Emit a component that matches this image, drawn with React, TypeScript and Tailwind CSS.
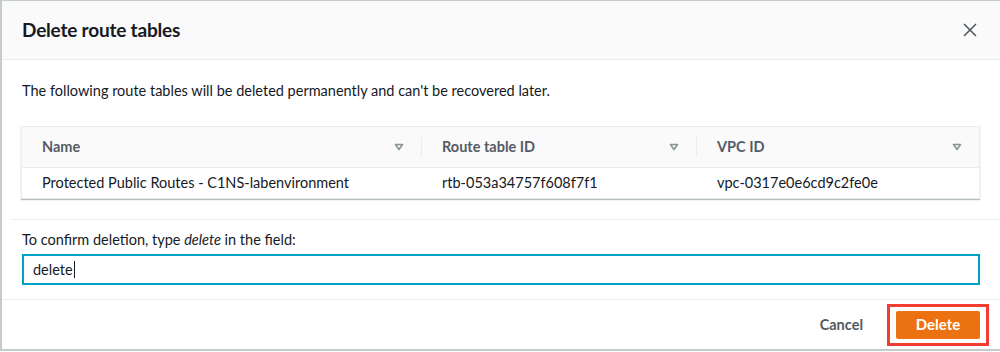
import { X } from 'lucide-react';

const columns = [
  { label: 'Name', width: 'w-[400px]' },
  { label: 'Route table ID', width: 'w-[275px]' },
  { label: 'VPC ID', width: 'flex-1' },
];

const row = ['Protected Public Routes - C1NS-labenvironment', 'rtb-053a34757f608f7f1', 'vpc-0317e0e6cd9c2fe0e'];

function SortIcon() {
  return (
    <svg width="10" height="8" viewBox="0 0 10 8" className="shrink-0">
      <path d="M1.5 1.5h7L5 6.5z" fill="none" stroke="#879596" strokeWidth="1.6" strokeLinejoin="round" />
    </svg>
  );
}

export default function App() {
  return (
    <div className="w-[1000px] h-[352px] bg-white font-['Lato',sans-serif] text-[#16191f]">
      <div className="h-[351px] border-l-2 border-b-2 border-t border-[#aab7b8]/70 flex flex-col">
        <div className="h-[59px] shrink-0 bg-[#fafafa] border-b border-[#eaeded] flex items-center justify-between pl-5 pr-[19px]">
          <h2 className="text-[19px] font-bold tracking-[-0.2px]">Delete route tables</h2>
          <X size={22} strokeWidth={1.8} className="text-[#545b64]" />
        </div>

        <div className="px-5 pt-[21px]">
          <p className="text-[14.5px] leading-5">The following route tables will be deleted permanently and can't be recovered later.</p>
        </div>

        <div className="px-5 pt-[25px] pb-5 ml-[-2px]">
          <div className="ml-[1px] border border-[#eaeded] shadow-[0_1px_1px_rgba(0,28,36,0.3)] text-[14.5px]">
            <div className="h-[41px] bg-[#fafafa] border-b border-[#eaeded] flex items-center">
              {columns.map((c, i) => (
                <div key={c.label} className={`${c.width} h-full flex items-center`}>
                  <div className="flex-1 flex items-center justify-between pl-5 pr-[17px] font-bold text-[#545b64]">
                    <span>{c.label}</span>
                    <SortIcon />
                  </div>
                  {i < columns.length - 1 && <div className="w-px h-[20px] bg-[#eaeded]" />}
                </div>
              ))}
            </div>
            <div className="h-[30px] flex items-center">
              {row.map((v, i) => (
                <div key={v} className={`${columns[i].width} pl-5`}>
                  {v}
                </div>
              ))}
            </div>
          </div>
        </div>

        <div className="ml-[9px] border-t border-[#eaeded]" />

        <div className="px-5 pt-[10px] pb-[14px]">
          <label className="block text-[14.5px] leading-5 mb-[4px]">
            To confirm deletion, type <i>delete</i> in the field:
          </label>
          <div className="h-[31px] border-2 border-[#00a1c9] flex items-center px-[9px] text-[14.5px]">
            <span>delete</span>
            <span className="w-px h-[17px] bg-[#16191f] ml-px" />
          </div>
        </div>

        <div className="flex-1 border-t border-[#eaeded] flex items-center justify-end pr-[11px]">
          <button className="text-[14.5px] font-bold text-[#545b64] px-5 py-1 mr-[4px]">Cancel</button>
          <div className="border-[3px] border-[#f33c32] px-[6px] py-[4px]">
            <button className="w-[84px] h-[28px] bg-[#ec7211] text-white text-[15px] font-bold rounded-[2px]">Delete</button>
          </div>
        </div>
      </div>
    </div>
  );
}
